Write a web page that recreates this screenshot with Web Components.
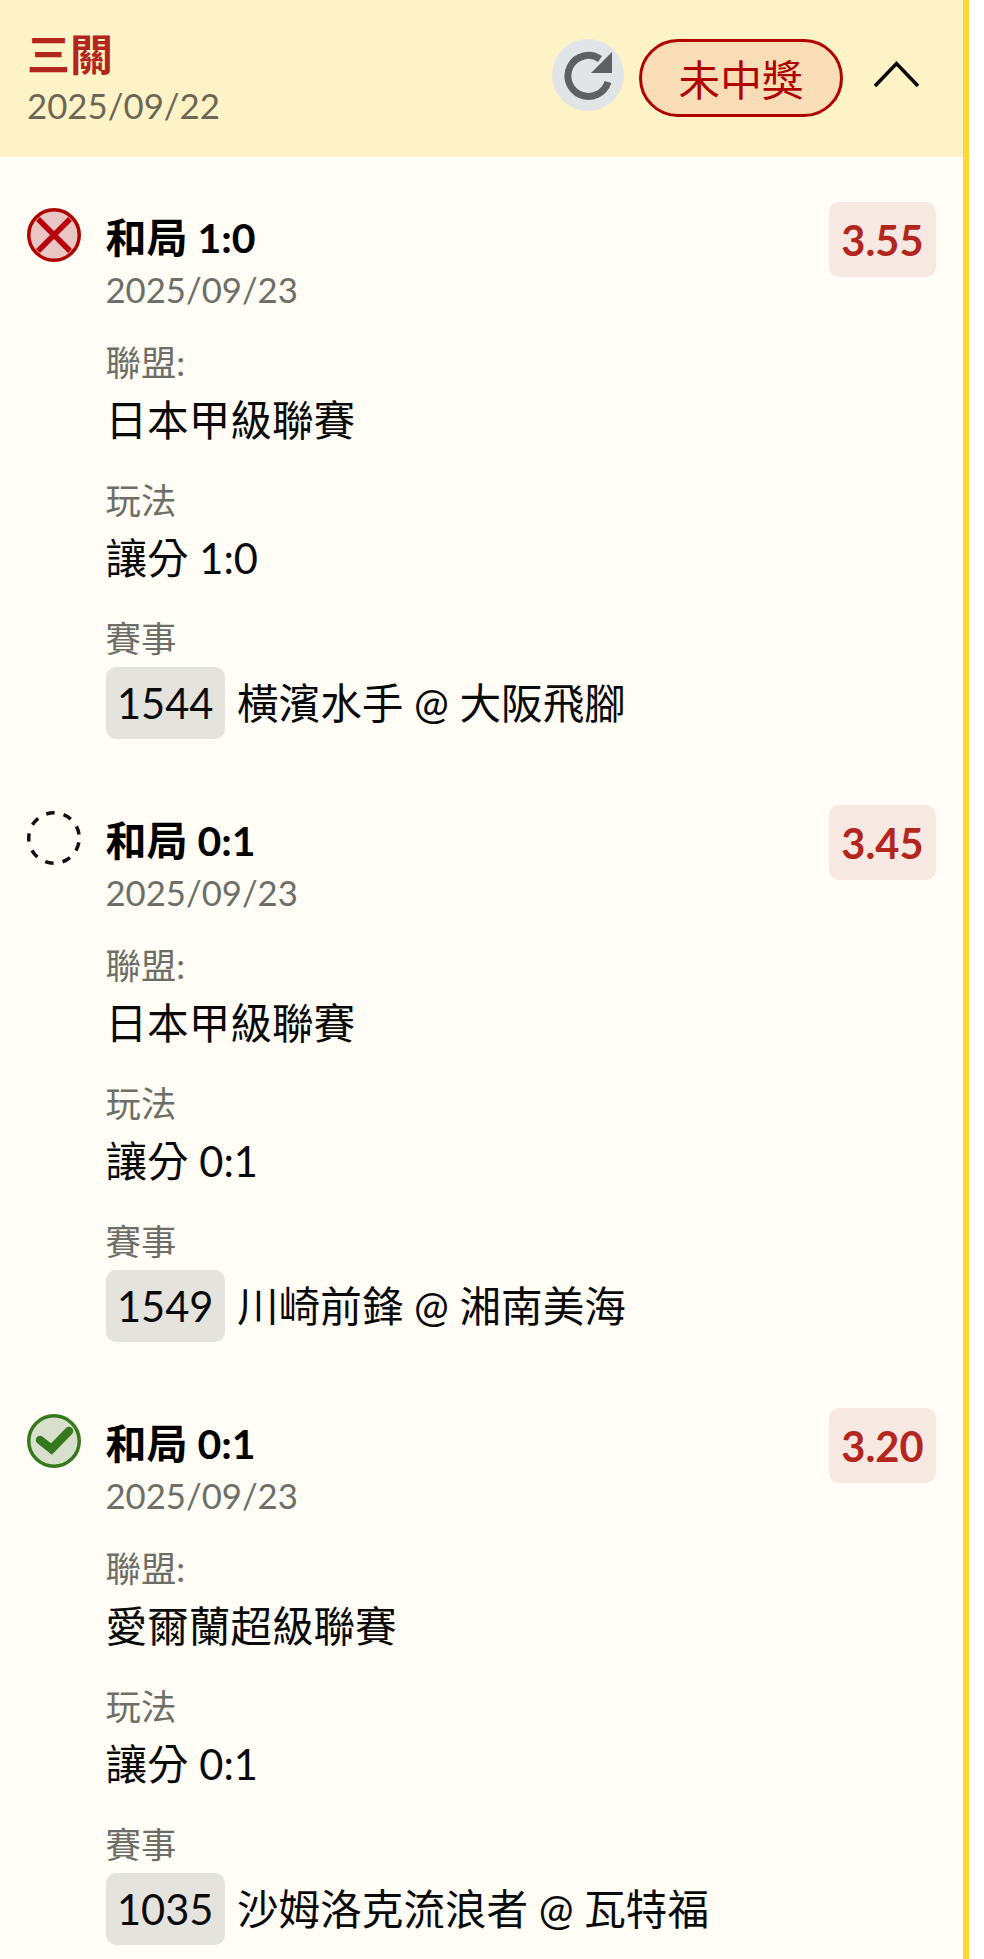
<!DOCTYPE html>
<html lang="zh-Hant">
<head>
<meta charset="utf-8">
<title>三關</title>
<style>
  html, body { margin: 0; background: #fff; }
  body { font-family: Lato, "Noto Sans CJK TC", sans-serif; height: 1959px; overflow: hidden; }
</style>
</head>
<body>
<parlay-card title-text="三關" date="2025/09/22" result="未中獎">
  <bet-leg status="lost" title-text="和局 1:0" date="2025/09/23" odds="3.55" league="日本甲級聯賽" play="讓分 1:0" code="1544" game="橫濱水手 @ 大阪飛腳"></bet-leg>
  <bet-leg status="pending" title-text="和局 0:1" date="2025/09/23" odds="3.45" league="日本甲級聯賽" play="讓分 0:1" code="1549" game="川崎前鋒 @ 湘南美海"></bet-leg>
  <bet-leg status="won" title-text="和局 0:1" date="2025/09/23" odds="3.20" league="愛爾蘭超級聯賽" play="讓分 0:1" code="1035" game="沙姆洛克流浪者 @ 瓦特福"></bet-leg>
</parlay-card>

<script>
  // Round status mark at the left of each leg
  const statusIcons = {
    lost: `<circle cx="27" cy="27" r="25.25" fill="#e9c6c3" stroke="#b00000" stroke-width="3.5"/>
           <path d="M11 11 43 43M43 11 11 43" stroke="#b7000b" stroke-width="5.5" fill="none"/>`,
    pending: `<circle cx="27" cy="27" r="25.25" fill="none" stroke="#111" stroke-width="3.5" stroke-dasharray="8.5 9.13" stroke-dashoffset="-4.56"/>`,
    won: `<circle cx="27" cy="27" r="25.25" fill="#d8dfcd" stroke="#37781f" stroke-width="3.5"/>
          <path d="M13 26 24.5 35 42 17" stroke="#37781f" stroke-width="8.5" stroke-linecap="round" stroke-linejoin="miter" fill="none"/>`
  };

  customElements.define(
    "status-icon",
    class extends HTMLElement {
      connectedCallback() {
        const shadow = this.attachShadow({ mode: "open" });
        shadow.innerHTML = `
          <style>
            :host { display: block; width: 54px; height: 54px; }
            svg { display: block; }
          </style>
          <svg width="54" height="54" viewBox="0 0 54 54">${statusIcons[this.getAttribute("status")]}</svg>`;
      }
    }
  );

  customElements.define(
    "info-field",
    class extends HTMLElement {
      connectedCallback() {
        const shadow = this.attachShadow({ mode: "open" });
        shadow.innerHTML = `
          <style>
            :host { display: block; margin-top: 27px; }
            :host(:first-of-type) { margin-top: 22px; }
            .label { font-size: 35.4px; line-height: 50px; color: #6e6e68; }
            .value { font-size: 41.6px; line-height: 58px; color: #0a0a0a; margin-top: 3px; display: flex; align-items: center; }
          </style>
          <div class="label">${this.getAttribute("label")}</div>
          <div class="value"><slot></slot></div>`;
      }
    }
  );

  customElements.define(
    "bet-leg",
    class extends HTMLElement {
      connectedCallback() {
        const a = (name) => this.getAttribute(name);
        const shadow = this.attachShadow({ mode: "open" });
        shadow.innerHTML = `
          <style>
            :host { display: grid; grid-template-columns: 54px 1fr auto; column-gap: 24.5px; padding: 45px 27px 0 27px; height: 603px; box-sizing: border-box; }
            status-icon { margin-top: 6px; }
            .title { font-size: 41px; line-height: 52px; font-weight: 700; color: #000; margin-top: 10px; }
            .date { font-size: 34.7px; line-height: 52px; color: #6e6e68; }
            .odds { align-self: start; width: 107px; height: 75px; box-sizing: border-box; border-radius: 10px; background: #f7e8e2; color: #b3261e; font-size: 41.6px; font-weight: 700; display: flex; align-items: center; justify-content: center; }
            .code { display: inline-flex; align-items: center; height: 72px; padding: 0 11.5px; border-radius: 10px; background: #e4e3de; margin-right: 12px; }
          </style>
          <status-icon status="${a("status")}"></status-icon>
          <div>
            <div class="title">${a("title-text")}</div>
            <div class="date">${a("date")}</div>
            <info-field label="聯盟:">${a("league")}</info-field>
            <info-field label="玩法">${a("play")}</info-field>
            <info-field label="賽事"><span class="code">${a("code")}</span>${a("game")}</info-field>
          </div>
          <div class="odds">${a("odds")}</div>`;
      }
    }
  );

  customElements.define(
    "parlay-card",
    class extends HTMLElement {
      connectedCallback() {
        const a = (name) => this.getAttribute(name);
        const shadow = this.attachShadow({ mode: "open" });
        shadow.innerHTML = `
          <style>
            :host { display: block; width: 969px; height: 1959px; box-sizing: border-box; border-right: 6px solid #fdd835; background: #fffdf5; overflow: hidden; }
            header { height: 157px; box-sizing: border-box; background: #fef3c7; display: flex; align-items: flex-start; padding: 30px 43px 0 27px; }
            .head-text { flex: 1; }
            .head-title { font-size: 43px; line-height: 50px; font-weight: 700; color: #b3261e; }
            .head-date { font-size: 34.8px; line-height: 52px; color: #6b6754; }
            .refresh { width: 72px; height: 72px; border-radius: 50%; background: #e2e5e8; margin-top: 9px; display: flex; align-items: center; justify-content: center; }
            .pill { width: 204px; height: 78px; box-sizing: border-box; margin: 9px 0 0 15px; border: 3px solid #b00000; border-radius: 39px; background: #f9ddb6; color: #b00000; font-size: 41.6px; display: flex; align-items: center; justify-content: center; }
            .chevron { display: block; margin: 30px 0 0 30px; }
          </style>
          <header>
            <div class="head-text">
              <div class="head-title">${a("title-text")}</div>
              <div class="head-date">${a("date")}</div>
            </div>
            <div class="refresh">
              <svg width="54" height="54" viewBox="0 0 54 54">
                <path d="M47 34A20.5 20.5 0 1 1 39 11" fill="none" stroke="#5f6063" stroke-width="7"/>
                <path d="M51 4V25H30Z" fill="#5f6063"/>
              </svg>
            </div>
            <div class="pill">${a("result")}</div>
            <svg class="chevron" width="47" height="28" viewBox="0 0 47 28">
              <path d="M2 26 23.5 3.5 45 26" fill="none" stroke="#0a0a0a" stroke-width="3.6"/>
            </svg>
          </header>
          <slot></slot>`;
      }
    }
  );
</script>
</body>
</html>
